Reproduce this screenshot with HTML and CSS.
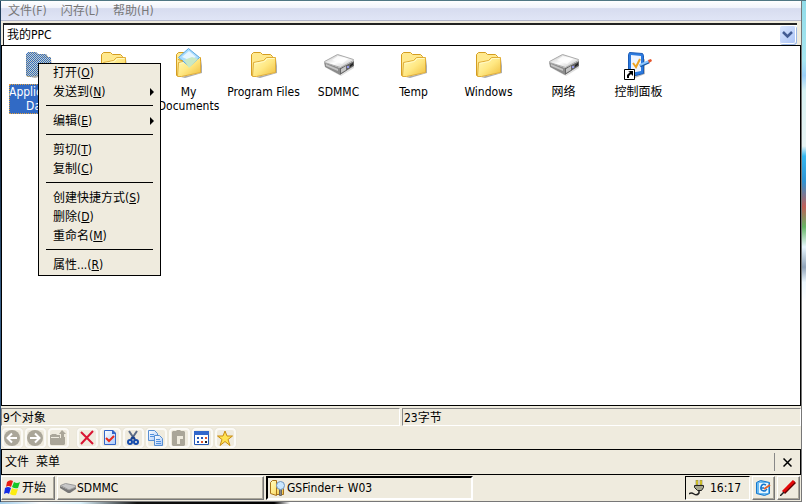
FILE: index.html
```html
<!DOCTYPE html>
<html lang="zh-CN">
<head>
<meta charset="utf-8">
<title>GSFinder+ W03</title>
<link rel="stylesheet" href="styles.css">
</head>
<body>
<svg class="defs" aria-hidden="true">
  <defs>
    <linearGradient id="gold" x1="0" y1="0" x2="1" y2="1"><stop offset="0" stop-color="#fffbc0"/><stop offset=".5" stop-color="#ffe883"/><stop offset="1" stop-color="#efbd3c"/></linearGradient>
    <linearGradient id="sheet" x1="0" y1="0" x2="1" y2="1"><stop offset="0" stop-color="#fff"/><stop offset="1" stop-color="#a9c9fa"/></linearGradient>
    <linearGradient id="metal" x1="0" y1="0" x2="1" y2="1"><stop offset="0" stop-color="#b8b8b8"/><stop offset=".5" stop-color="#fff"/><stop offset="1" stop-color="#bbb"/></linearGradient>
    <clipPath id="folder-shape"><path d="M3 28V6l2-2h8l2 2h8l2 3h3v16L8 29z"/></clipPath>
    <symbol id="folder" viewBox="0 0 32 32">
      <path fill="#777" opacity=".6" d="M8 29l19-4 2-14v14L12 30z"/>
      <path fill="#ffe98e" stroke="#d49d20" d="M3.500 27.500V6.500L5.500 4.500H12.500L14.500 6.500H22.500L24.500 8.500V23.500z"/>
      <path fill="url(#gold)" stroke="#e0ad38" d="M4.500 28.500L5.500 14.500 15.500 12.500 18.500 9.500 27.500 9.500V24.500L8.500 28.500z"/>
      <path fill="none" stroke="#fff9c4" d="M6.500 15.500l10-2 3-3h7"/>
    </symbol>
    <symbol id="drive" viewBox="0 0 32 32">
      <path fill="#bbb" opacity=".5" d="M3 20l15 7 13-9v2L18 28z"/>
      <path fill="#8c8c8c" d="M1 14l16 6v7L2 19z"/>
      <path fill="#666" d="M17 20l14-7v5l-14 9z"/>
      <path fill="url(#metal)" stroke="#aaa" d="M1.500 13.500L14.500 6.500 30.500 11.500V12.500L17.500 19.500 1.500 14.500z"/>
      <path fill="#fff" opacity=".8" d="M9 12l6-4 10 3-6 5z"/>
      <path fill="#c4c4c4" d="M18 21l5-3v4l-5 3zM3 16l12 5v2L3 18z"/>
      <path fill="#9296e8" d="M24 18h2v2h-2z"/><path fill="#222" d="M27 17l3-2v2l-3 2z"/>
    </symbol>
  </defs>
</svg>
<div class="screen">
  <nav class="menubar">
    <button>文件(F)</button><button>闪存(L)</button><button>帮助(H)</button>
  </nav>
  <div class="address">
    <select aria-label="地址"><option>我的PPC</option></select>
    <span class="drop"><svg viewBox="0 0 15 17"><path d="M3 6l4.500 4.500L12 6" fill="none" stroke="#435c94" stroke-width="2.500"/></svg></span>
  </div>
  <main class="files">
    <a class="file selected" href="#"><svg viewBox="0 0 32 32"><use href="#folder"/><g clip-path="url(#folder-shape)"><path fill="#a9c4e6" opacity=".6" d="M3 4h26v25H3z"/><path stroke="#316ac5" stroke-dasharray="1 1" d="M3 4.500h26M4 5.500h26M3 6.500h26M4 7.500h26M3 8.500h26M4 9.500h26M3 10.500h26M4 11.500h26M3 12.500h26M4 13.500h26M3 14.500h26M4 15.500h26M3 16.500h26M4 17.500h26M3 18.500h26M4 19.500h26M3 20.500h26M4 21.500h26M3 22.500h26M4 23.500h26M3 24.500h26M4 25.500h26M3 26.500h26M4 27.500h26M3 28.500h26"/></g></svg><span>Application Data</span></a>
    <a class="file" href="#"><svg><use href="#folder"/></svg></a>
    <a class="file" href="#"><svg viewBox="0 0 32 32"><use href="#folder"/><path fill="#a8dcff" stroke="#5ca8e0" d="M5.500 9.500L15.500 .500 26.500 9.500 16.500 18.500z"/><path fill="#e6f6ff" d="M9 9l7-6 7 6-7 3z"/><path fill="#c9e8c4" d="M11 12l8-3 6 2-9 9z"/><path fill="none" stroke="#d8a125" d="M5 11.500l5 1.500M27.500 10v3"/></svg><span>My Documents</span></a>
    <a class="file" href="#"><svg><use href="#folder"/></svg><span>Program Files</span></a>
    <a class="file" href="#"><svg><use href="#drive"/></svg><span>SDMMC</span></a>
    <a class="file" href="#"><svg><use href="#folder"/></svg><span>Temp</span></a>
    <a class="file" href="#"><svg><use href="#folder"/></svg><span>Windows</span></a>
    <a class="file" href="#"><svg><use href="#drive"/></svg><span>网络</span></a>
    <a class="file" href="#"><svg viewBox="0 0 32 32"><path fill="#777" opacity=".5" d="M8 28l12-2V12l2-1v15L12 30z"/><path fill="#2c7be0" stroke="#1c5cb8" d="M5.500 6.500L6.500 4.500 19.500 5.500 20.500 7.500V25.500L8.500 28.500 5.500 26.500z"/><path fill="#eef4ff" d="M8 7l10 1v15L8 25z"/><path fill="none" stroke="#eea320" stroke-width="2" d="M10 15l3 4 4-8"/><path fill="none" stroke="#1658a8" stroke-width="3" d="M17 18l9-4"/><path fill="none" stroke="#8cc6ff" stroke-width="2" d="M17 17l9-4"/><path fill="#e5542b" d="M25 12l3-1 1 2-3 2z"/><path fill="#fff" stroke="#000" d="M1.500 21.500h10v10h-10z"/><path fill="#000" d="M5 23h5v5l-2-2-2 2v2H4v-3l3-3z"/></svg><span>控制面板</span></a>
    <div class="context" role="menu">
      <button role="menuitem">打开(<u>O</u>)</button>
      <button role="menuitem" class="sub">发送到(<u>N</u>)</button>
      <hr>
      <button role="menuitem" class="sub">编辑(<u>E</u>)</button>
      <hr>
      <button role="menuitem">剪切(<u>T</u>)</button>
      <button role="menuitem">复制(<u>C</u>)</button>
      <hr>
      <button role="menuitem">创建快捷方式(<u>S</u>)</button>
      <button role="menuitem">删除(<u>D</u>)</button>
      <button role="menuitem">重命名(<u>M</u>)</button>
      <hr>
      <button role="menuitem">属性...(<u>R</u>)</button>
    </div>
  </main>
  <div class="status"><span>9个对象</span><span>23字节</span></div>
  <div class="tools">
    <button aria-label="后退"><svg viewBox="0 0 16 16"><circle cx="8" cy="8" r="8" fill="#aaa699"/><path d="M13 8H4M8 3.500L3.500 8 8 12.500" fill="none" stroke="#fff" stroke-width="2"/></svg></button>
    <button aria-label="前进"><svg viewBox="0 0 16 16"><circle cx="8" cy="8" r="8" fill="#aaa699"/><path d="M3 8h9M8 3.500L12.500 8 8 12.500" fill="none" stroke="#fff" stroke-width="2"/></svg></button>
    <button aria-label="向上"><svg viewBox="0 0 16 16"><path fill="#aaa699" d="M0 5h1l1-1h4l1 1h3v2h5v7l-1 1H1l-1-1zM12 0l4 4h-2v4h-3V4H9z"/><path stroke="#efebde" d="M1 7.500h8M10.500 5v3"/></svg></button>
    <button class="group" aria-label="删除"><svg viewBox="0 0 16 16"><path d="M2 2l12 12M14 1L2 14" fill="none" stroke="#d91533" stroke-width="2"/></svg></button>
    <button aria-label="属性"><svg viewBox="0 0 16 16"><path fill="url(#sheet)" stroke="#3265c8" d="M2.500 .500h8l3 3v11h-11z"/><path fill="#3265c8" d="M10 0h1l3 3v1h-4z"/><path d="M4 8l3 3 5-5" fill="none" stroke="#e52b1c" stroke-width="2"/></svg></button>
    <button aria-label="剪切"><svg viewBox="0 0 16 16"><path d="M4 1l6 9M12 1L6 10" fill="none" stroke="#5b6b85" stroke-width="2"/><path d="M8 7L6 9M8 7l2 2" stroke="#163e8c" stroke-width="2"/><g fill="none" stroke="#164cad" stroke-width="2"><circle cx="5" cy="12" r="2"/><circle cx="11" cy="12" r="2"/></g></svg></button>
    <button aria-label="复制"><svg viewBox="0 0 16 16"><g fill="url(#sheet)" stroke="#578fd2"><path d="M.500 .500h6l3 3v7h-9z"/><path d="M6.500 5.500h5l3 3v7h-8z"/></g><path d="M2 4.500h4M2 6.500h4M8 9.500h4M8 11.500h5M8 13.500h5" stroke="#5291dc"/></svg></button>
    <button aria-label="粘贴"><svg viewBox="0 0 16 16"><path fill="#aaa699" d="M1 2l1-1h3l1-1h3l1 1h3l1 1v13l-1 1H2l-1-1z"/><path fill="#efebde" d="M6 6h6v3H9v5H6z"/></svg></button>
    <button aria-label="查看"><svg viewBox="0 0 16 16"><path fill="#fff" stroke="#2458b7" d="M.500 1.500h14v13H.500z"/><path fill="#3167cb" d="M0 1h15v4H0z"/><path fill="#2458b7" d="M3 7h2v2H3zM7 7h2v2H7zM3 11h2v2H3z"/><path fill="#e05430" d="M11 7h2v2h-2zM7 11h2v2H7z"/><path fill="#222" d="M11 11h2v2h-2z"/></svg></button>
    <button aria-label="收藏"><svg viewBox="0 0 16 16"><path fill="#ffe353" stroke="#c98c13" d="M8 1l2 5h5.500L11 9.500l2 6-5-4-5 4 2-6L.500 6H6z"/></svg></button>
  </div>
  <div class="commands"><button>文件</button><button>菜单</button><button class="close" aria-label="关闭"><svg viewBox="0 0 9 9"><path d="M.500 .500l8 8M8.500 .500l-8 8" stroke="#000" stroke-width="1.500"/></svg></button></div>
  <footer class="taskbar">
    <button class="start"><svg viewBox="0 0 16 16"><path fill="#e81b13" d="M3 2q3-3 6-1L7 7Q4 5 2 7z"/><path fill="#18c629" d="M10 2q3 2 6 0l-2 6q-3 1-6-1z"/><path fill="#142de5" d="M1 8q3-2 6 0l-2 6q-2-2-5 0z"/><path fill="#fced12" d="M8 8q3 2 6 1l-2 6q-3 1-6-1z"/></svg>开始</button>
    <button class="task"><svg viewBox="0 0 16 16"><path fill="#777" d="M0 6l9 4 7-3v2l-6 4H8L0 8z"/><path fill="#c8c8c8" stroke="#999" d="M.500 5.500L5.500 3.500 15.500 5.500V7L9 10z"/></svg>SDMMC</button>
    <button class="task active"><svg viewBox="0 0 16 16"><path fill="url(#gold)" stroke="#a8731a" d="M.500 2.500l2-2h4v15l-6-2zM6.500 3.500h7v11h-7z"/><path fill="#888" stroke="#666" d="M9.500 8.500h2v7h-2z"/><circle cx="10.500" cy="5.500" r="4" fill="#c9e7ff" stroke="#7398c0"/></svg>GSFinder+ W03</button>
    <div class="tray"><svg viewBox="0 0 16 16"><path fill="#f3df18" stroke="#555" stroke-width=".500" d="M7 0h2v5H7zM11 0h2v5h-2z"/><path fill="#a5a58c" stroke="#222" d="M5.500 5.500h9v2l-2 3h-4l-3-3z"/><path fill="none" stroke="#222" stroke-width="1.500" d="M10 10v3q-2 3-5 1t-5 0"/></svg><time>16:17</time></div>
    <button class="quick" aria-label="桌面"><svg viewBox="0 0 16 16"><path fill="#69baf2" stroke="#1677cb" d="M1.500 2.500l4-2 9 2v11l-5 2-8-2z"/><path fill="#e7f6ff" d="M4 3h9v10H4z"/><path fill="none" stroke="#1475cc" stroke-width="1.500" d="M11 5q-4-2-5 2t4 4l2-2M6 8h3"/><path stroke="#e6632b" stroke-width="2" d="M9 9l6-4"/></svg></button>
    <button class="quick" aria-label="输入"><svg viewBox="0 0 16 16"><path fill="none" stroke="#630000" stroke-width="3" d="M4 13L15 2"/><path fill="none" stroke="#e30909" stroke-width="3" d="M3 12L14 1"/><path stroke="#222" stroke-width="1.500" d="M0 16l4-4"/></svg></button>
  </footer>
</div>
</body>
</html>
```
FILE: styles.css
```css
* { box-sizing: border-box; }
body {
  margin: 0;
  height: 100vh;
  padding: 1px 4px 2px 1px;
  font: 12px/14px "DejaVu Sans Condensed", "Noto Sans CJK SC", sans-serif;
  color: #000;
  background:
    linear-gradient(#507783, #507783) top / 100% 1px no-repeat,
    linear-gradient(90deg, #9fcbe8, #fff 5%, #dff5ff 10%, #111 17%, #000 34%, #fff 36%) bottom / 100% 2px no-repeat,
    linear-gradient(#20405e, #10263f 30%, #386089 60%, #24446a) left / 1px 100% no-repeat,
    linear-gradient(#91dce9 0, #a7e6f0 12%, #99cef8 15%, #d7f2f3 18%, #e7f3f3 29%, #35b7ef 31%, #2f93d2 36%, #c06059 41%, #65b565 45%, #e8f7ff 49%, #8fa2b7 53%, #edf8ff 56%, #fff 60%) right / 5px 100% no-repeat;
}
button {
  margin: 0;
  padding: 0;
  border: 0;
  background: none;
  font: inherit;
  color: inherit;
}
a { color: inherit; text-decoration: none; }
svg { display: block; }
.defs { position: absolute; width: 0; height: 0; }
.screen {
  height: 100%;
  display: flex;
  flex-direction: column;
  background: #efebde;
  border-right: 1px solid #777;
  border-bottom: 1px solid #777;
}
.menubar {
  display: flex;
  gap: 14px;
  height: 20px;
  padding: 1px 7px 0;
  color: #777;
  border-bottom: 1px solid #b5b8cc;
  background: linear-gradient(#fff, #f2f4fb 35%, #d7dcef 40%, #e0e5f6);
}
.address {
  display: flex;
  height: 22px;
  margin: 2px 4px 0 2px;
  background: #fff;
  border-top: 2px solid #222;
  border-left: 1px solid #222;
}
.address select {
  flex: 1;
  padding: 0 3px;
  border: 0;
  appearance: none;
  background: #fff;
  font: inherit;
}
.drop {
  width: 15px;
  height: 17px;
  margin: 1px 2px;
  border-radius: 2px;
  background: linear-gradient(135deg, #dae6ff, #adc5f6);
  box-shadow: 0 0 0 1px #fff, 1px 1px 0 1px #9cb7e4;
}
.files {
  position: relative;
  flex: 1;
  min-height: 0;
  display: grid;
  grid-template-columns: 74px repeat(auto-fill, 75px);
  align-content: start;
  padding-top: 2px;
  background: #fff;
  border: 1px solid #000;
}
.file {
  display: flex;
  flex-direction: column;
  align-items: center;
  gap: 4px;
  text-align: center;
}
.file svg { width: 32px; height: 32px; }
.file span { padding-top: 1px; }
.file.selected span {
  width: 60px;
  color: #fff;
  background: #316ac5;
  outline: 1px dotted #e0a040;
  outline-offset: -1px;
  height: 30px;
}
.context {
  position: absolute;
  left: 36px;
  top: 17px;
  width: 123px;
  border: 1px solid #000;
  background: #efebde;
}
.context button {
  display: block;
  width: 100%;
  height: 19px;
  padding: 0 0 2px 14px;
  text-align: left;
}
.context hr {
  height: 1px;
  margin: 3px 7px 6px;
  border: 0;
  background: #000;
}
.context .sub {
  display: flex;
  align-items: center;
}
.context .sub::after {
  content: "";
  margin: 0 6px 0 auto;
  border: 4px solid transparent;
  border-left: 4px solid #000;
  border-right: 0;
}
.status {
  display: grid;
  grid-template-columns: 1fr 1fr;
  gap: 2px;
  padding-top: 2px;
}
.status span {
  height: 18px;
  padding: 1px;
  border: 1px solid #fff;
  border-top-color: #888;
  border-left-color: #888;
  line-height: 16px;
}
.tools {
  display: flex;
  align-items: center;
  gap: 2px;
  height: 23px;
  padding-left: 1px;
}
.tools button {
  padding: 1px;
  border: 2px solid #fbfaf6;
  border-radius: 4px;
  box-shadow: 0 0 1px #cac6b9;
  width: 21px;
  height: 20px;
}
.tools button svg { width: 16px; height: 16px; margin: -1px 0 0 -1px; }
.tools button.group { margin-left: 6px; }
.commands {
  display: flex;
  align-items: center;
  gap: 7px;
  height: 26px;
  padding-left: 3px;
  border: 1px solid #000;
}
.commands .close {
  height: 18px;
  margin-left: auto;
  padding: 0 8px;
  border-left: 1px solid #888;
}
.close svg { width: 9px; height: 9px; }
.taskbar {
  display: flex;
  align-items: center;
  gap: 2px;
  height: 26px;
  padding: 1px 1px 1px 0;
}
.taskbar svg { flex: none; width: 16px; height: 16px; }
.taskbar button, .tray {
  display: flex;
  align-items: center;
  gap: 2px;
  height: 24px;
  padding: 0 2px;
  border: 1px solid;
  border-color: #fff #777 #777 #fff;
  box-shadow: inset -1px -1px #aaa699;
}
.taskbar .start { width: 54px; }
.taskbar .task { flex: 0 1 207px; gap: 1px; }
.taskbar .task.active {
  border: 2px solid;
  border-color: #000 #fff #fff #000;
  box-shadow: none;
}
.taskbar .tray {
  width: 65px;
  margin-left: auto;
  gap: 5px;
  padding: 0 3px;
  border-color: #000 #fff #fff #000;
  box-shadow: none;
}
.taskbar .quick { width: 23px; }
```
